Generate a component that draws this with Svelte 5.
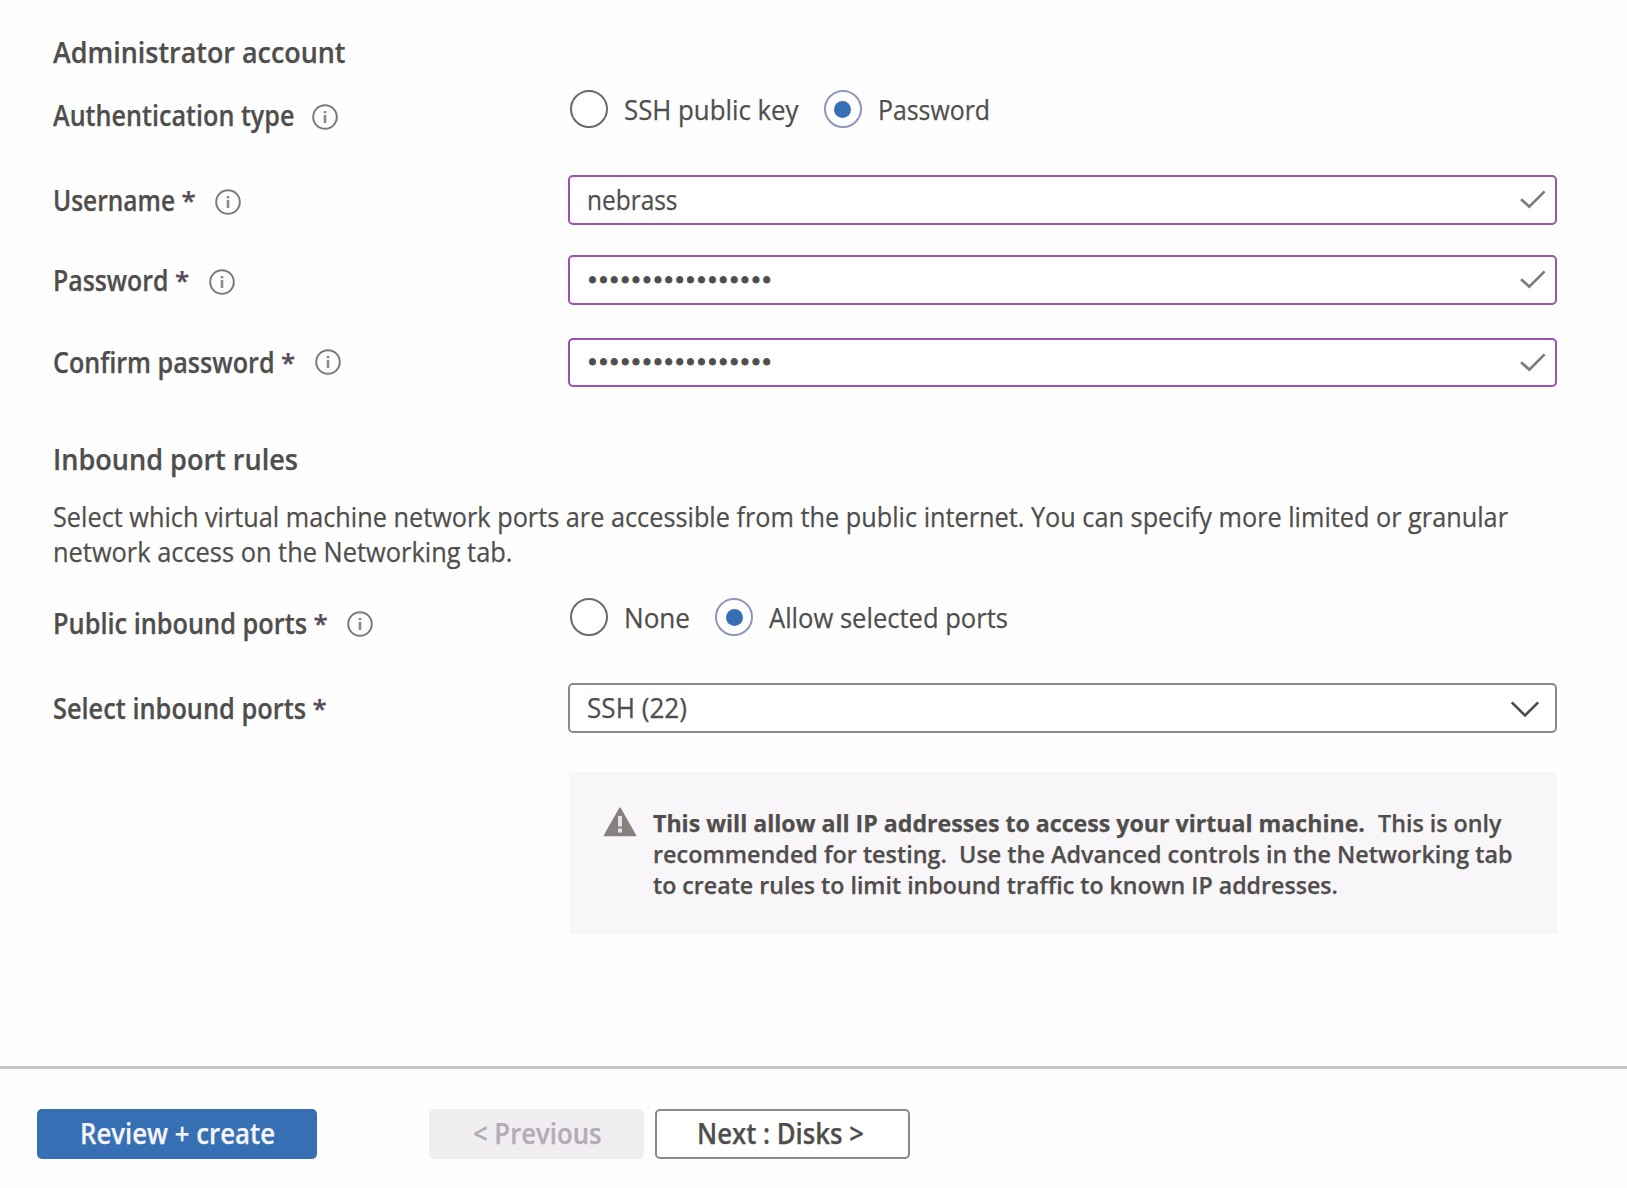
<script>
  let auth = $state('Password');
  let ports = $state('Allow selected ports');
  // Labels carry their set width (w) and the natural width of the font (n).
  const fields = [
    { id: 'user', label: 'Username', w: 122, n: 139.5, value: 'nebrass', vw: 90.5, vn: 103.7 },
    { id: 'pass', label: 'Password', w: 115.5, n: 130.2, value: '•'.repeat(17), vw: 185.3, vn: 179, secret: true },
    { id: 'confirm', label: 'Confirm password', w: 221.5, n: 247, value: '•'.repeat(17), vw: 185.3, vn: 179, secret: true }
  ];
  const authOptions = [
    { text: 'SSH public key', w: 174.5, n: 189.3 },
    { text: 'Password', w: 112, n: 126.2 }
  ];
  const portOptions = [
    { text: 'None', w: 66, n: 70.8 },
    { text: 'Allow selected ports', w: 239, n: 261.8 }
  ];
</script>

{#snippet fit(text, w, n)}
  <span class="fit" style="--w: {w}px; --k: {w / n}"><span>{text}</span></span>
{/snippet}

{#snippet info()}
  <svg class="info" viewBox="0 0 26 26" width="26" height="26" aria-hidden="true">
    <circle cx="13" cy="13" r="11.8" />
    <path class="dot" d="M13 7v2.4" />
    <path class="stem" d="M13 11v8" />
  </svg>
{/snippet}

{#snippet star()}<span class="star">*</span>{/snippet}

{#snippet radios(options, selected, pick)}
  <div class="radios">
    {#each options as o}
      <button class="radio" class:on={o.text === selected} onclick={() => pick(o.text)}>
        <span class="ring"></span>
        {@render fit(o.text, o.w, o.n)}
      </button>
    {/each}
  </div>
{/snippet}

<div class="page">
  <main>
    <h2>{@render fit('Administrator account', 292.5, 304.4)}</h2>

    <div class="row auth">
      <div class="label">{@render fit('Authentication type', 241.5, 268.8)}{@render info()}</div>
      {@render radios(authOptions, auth, (v) => (auth = v))}
    </div>

    {#each fields as f}
      <div class="row {f.id}">
        <div class="label">{@render fit(f.label, f.w, f.n)}{@render star()}{@render info()}</div>
        <div class="box" class:secret={f.secret}>
          {@render fit(f.value, f.vw, f.vn)}
          <svg class="check" viewBox="0 0 28 20" width="28" height="20" aria-hidden="true">
            <path d="M2 10.2 10.3 17.6 25.6 2.4" />
          </svg>
        </div>
      </div>
    {/each}

    <h2 class="inbound">{@render fit('Inbound port rules', 245, 253.5)}</h2>
    <p>
      {@render fit('Select which virtual machine network ports are accessible from the public internet. You can specify more limited or granular', 1455, 1611.7)}
      {@render fit('network access on the Networking tab.', 459.5, 506.6)}
    </p>

    <div class="row public">
      <div class="label">{@render fit('Public inbound ports', 254, 280.9)}{@render star()}{@render info()}</div>
      {@render radios(portOptions, ports, (v) => (ports = v))}
    </div>

    <div class="row select">
      <div class="label">{@render fit('Select inbound ports', 253, 279.4)}{@render star()}</div>
      <div class="box">
        {@render fit('SSH (22)', 100, 107.2)}
        <svg class="chevron" viewBox="0 0 30 18" width="30" height="18" aria-hidden="true">
          <path d="M1.8 2.4 15 15.4 28.2 2.4" />
        </svg>
      </div>
    </div>

    <div class="notice">
      <svg class="warn" viewBox="0 0 34 30" width="34" height="30" aria-hidden="true">
        <path class="tri" d="M17 1.2 32.6 28.6H1.4Z" />
        <path class="bang" d="M17 9v10.5M17 21.5v4" />
      </svg>
      <div class="copy">
        <div class="line"><strong>{@render fit('This will allow all IP addresses to access your virtual machine.', 712, 738.3)}</strong>{@render fit('This is only', 123.5, 127.5)}</div>
        <div class="line">{@render fit('recommended for testing.\u00a0 Use the Advanced controls in the Networking tab', 859.5, 882.5)}</div>
        <div class="line">{@render fit('to create rules to limit inbound traffic to known IP addresses.', 685, 709.1)}</div>
      </div>
    </div>
  </main>

  <footer>
    <button class="btn primary">{@render fit('Review + create', 195, 211.9)}</button>
    <button class="btn disabled" disabled>{@render fit('< Previous', 128.5, 140)}</button>
    <button class="btn next">{@render fit('Next : Disks >', 167, 181.7)}</button>
  </footer>
</div>

<style>
  :global(body) { margin: 0; background: #fefefe; }
  .page {
    display: flex;
    flex-direction: column;
    width: 1627px;
    height: 1188px;
    box-sizing: border-box;
    overflow: hidden;
    font-family: "Open Sans", "Noto Sans", sans-serif;
    font-size: 28px;
    line-height: 36px;
    color: #504e4c;
    -webkit-text-stroke: 0.25px currentColor;
  }
  main { flex: 1; padding: 34px 70px 0 53px; }
  h2 { margin: 0; font-size: 28px; font-weight: 600; height: 36px; display: flex; }
  .fit { display: inline-block; width: var(--w); white-space: pre; flex: none; text-align: left; }
  .fit > span { display: inline-block; transform: scaleX(var(--k)); transform-origin: 0 50%; }

  .row { display: grid; grid-template-columns: 515px 989px; height: 50px; align-items: center; }
  .auth { margin-top: 14px; }
  .user { margin-top: 41px; }
  .pass { margin-top: 30px; }
  .confirm { margin-top: 33px; height: 49px; }
  .public { margin-top: 23px; }
  .select { margin-top: 41px; }

  .label { display: flex; align-items: center; font-weight: 600; height: 36px; }
  .auth .label, .public .label { padding-top: 12px; }
  .confirm .label { padding-bottom: 2px; }
  .star { width: 15px; margin-left: 6px; text-align: center; font-size: 26px; color: #57485a; }
  .info { margin: 4px 0 0 19px; fill: none; stroke: #7f777d; stroke-width: 2; flex: none; }
  .info .dot, .info .stem { stroke: #8f878f; stroke-width: 2.6; }
  .auth .info { margin-left: 17.5px; }
  .confirm .info, .public .info { margin-top: 1px; }

  .box {
    display: flex;
    align-items: center;
    justify-content: space-between;
    box-sizing: border-box;
    height: 100%;
    padding: 0 8.5px 2px 17px;
    border: 2px solid #9d50b6;
    border-radius: 5px;
    background: #fff;
  }
  .secret .fit { -webkit-text-stroke-width: 1px; }
  .confirm .secret .fit { margin-top: -2px; }
  .select .box { border-color: #8d868f; padding-right: 15px; }
  .check { fill: none; stroke: #7f7a7d; stroke-width: 2.7; }
  .chevron { fill: none; stroke: #4c4a4a; stroke-width: 2.6; margin-top: 4px; }

  .radios { display: flex; gap: 25px; padding-left: 2px; }
  .radio {
    display: flex;
    align-items: center;
    gap: 16px;
    padding: 0;
    border: 0;
    background: none;
    font: inherit;
    color: inherit;
  }
  .ring {
    display: grid;
    place-items: center;
    width: 38px;
    height: 38px;
    box-sizing: border-box;
    border: 2px solid #6d696b;
    border-radius: 50%;
    background: #fff;
  }
  .on .ring { border-color: #8f97b8; }
  .on .ring::after { content: ""; width: 17px; height: 17px; border-radius: 50%; background: #366fb3; }

  .inbound { margin-top: 54px; }
  p { margin: 22px 0 0; line-height: 35px; display: flex; flex-direction: column; }

  .notice {
    display: flex;
    box-sizing: border-box;
    width: 988px;
    height: 162px;
    margin: 39px 0 0 515.5px;
    padding: 35px 0 0 34px;
    background: #f8f6f8;
    font-size: 24px;
    font-weight: 600;
    line-height: 31px;
  }
  .warn { flex: none; margin-right: 16px; }
  .tri { fill: #85817f; stroke: #85817f; stroke-width: 1.5; stroke-linejoin: round; }
  .bang { fill: none; stroke: #e6e2e6; stroke-width: 4; }
  .line { display: flex; height: 31px; }
  strong { font-weight: 700; margin-right: 13.5px; }

  footer {
    display: flex;
    box-sizing: border-box;
    height: 122px;
    padding: 40px 0 0 37px;
    border-top: 3px solid #c8c3ca;
  }
  .btn {
    display: flex;
    align-items: center;
    justify-content: center;
    box-sizing: border-box;
    height: 50px;
    padding: 0 0 3px;
    border: 0;
    border-radius: 5px;
    font: 600 28px/36px "Open Sans", "Noto Sans", sans-serif;
    color: #504e4c;
  }
  .primary { width: 280px; background: #366fb3; color: #f6f4f8; }
  .disabled { width: 215px; margin-left: 112px; padding-left: 2px; background: #f1eef1; color: #b3abb6; }
  .next { width: 255px; margin-left: 11px; padding-right: 4px; background: #fff; border: 2px solid #8d868f; }
</style>
